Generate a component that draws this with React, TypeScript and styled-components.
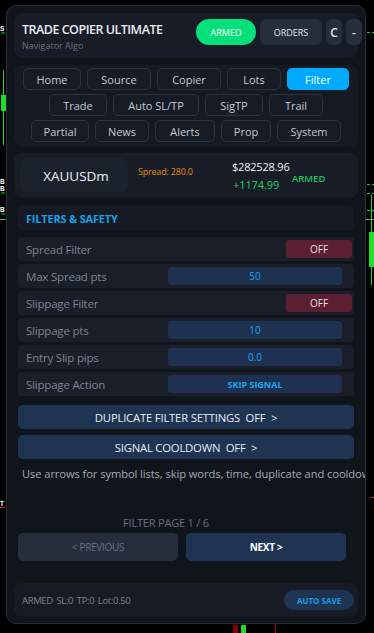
import styled, { createGlobalStyle } from "styled-components";

const GlobalStyle = createGlobalStyle`
  html, body {
    margin: 0;
    padding: 0;
    background: #000000;
  }
  body {
    font-family: "Open Sans", "Noto Sans", "Liberation Sans", sans-serif;
    width: 374px;
    height: 633px;
    overflow: hidden;
  }
`;

const Stage = styled.div`
  position: relative;
  width: 374px;
  height: 633px;
  padding-top: 5px;
  box-sizing: border-box;
`;

const ChartLayer = styled.svg`
  position: absolute;
  left: 0;
  top: 0;
  width: 374px;
  height: 633px;
  z-index: 0;
`;

const Panel = styled.div`
  position: relative;
  z-index: 1;
  margin-left: 6px;
  width: 360px;
  height: 619px;
  box-sizing: border-box;
  border: 1px solid #272d39;
  border-radius: 10px;
  background: #10141b;
  overflow: hidden;
  display: flex;
  flex-direction: column;
  padding: 7px 7px 0 7px;
`;

const Card = styled.div<{ $bg?: string; $mt?: number }>`
  background: ${(p) => p.$bg ?? "#171c26"};
  border-radius: 8px;
  margin-top: ${(p) => p.$mt ?? 0}px;
  box-sizing: border-box;
`;

const HeaderCard = styled(Card)`
  height: 45px;
  display: flex;
  align-items: flex-start;
  padding: 6px 0 0 8px;
`;

const TitleBlock = styled.div`
  display: flex;
  flex-direction: column;
  margin-top: 3px;
`;

const Title = styled.div`
  font-size: 12.5px;
  font-weight: 600;
  color: #e9edf3;
  line-height: 15px;
  letter-spacing: -0.5px;
`;

const Subtitle = styled.div`
  font-size: 9px;
  color: #687080;
  line-height: 12px;
  margin-top: 3px;
`;

const HeaderButtons = styled.div`
  margin-left: auto;
  margin-right: -4px;
  display: flex;
  gap: 4px;
`;

const HeaderButton = styled.div<{ $w: number; $armed?: boolean }>`
  width: ${(p) => p.$w}px;
  height: 26px;
  border-radius: ${(p) => (p.$armed ? "13px" : "6px")};
  background: ${(p) => (p.$armed ? "#06e07a" : "#262d3b")};
  color: ${(p) => (p.$armed ? "#ffffff" : "#e2e5ea")};
  font-size: ${(p) => (p.$w < 20 ? "12px" : "9px")};
  font-weight: ${(p) => (p.$w < 20 ? 600 : 500)};
  display: flex;
  align-items: center;
  justify-content: center;
`;

const TabsCard = styled(Card)`
  height: 82px;
  padding-top: 3px;
  display: flex;
  flex-direction: column;
  gap: 4px;
  background: #151a23;
`;

const TabRow = styled.div`
  display: flex;
  justify-content: center;
  gap: 6px;
`;

const Tab = styled.div<{ $w: number; $active?: boolean }>`
  width: ${(p) => p.$w}px;
  height: 22px;
  box-sizing: border-box;
  border-radius: 5px;
  border: 1px solid ${(p) => (p.$active ? "#00aaff" : "#2b3242")};
  background: ${(p) => (p.$active ? "#00aaff" : "#161b25")};
  color: ${(p) => (p.$active ? "#ffffff" : "#c3c8d1")};
  font-size: 11px;
  display: flex;
  align-items: center;
  justify-content: center;
`;

const SymbolCard = styled(Card)`
  height: 45px;
  padding: 5px 6px;
  display: flex;
  align-items: stretch;
`;

const SymbolBox = styled.div`
  width: 108px;
  border-radius: 7px;
  background: #1c222d;
  color: #eef1f5;
  font-size: 13.5px;
  font-weight: 500;
  display: flex;
  align-items: center;
  justify-content: center;
  padding-left: 4px;
  box-sizing: border-box;
`;

const SpreadText = styled.div`
  width: 104px;
  padding-left: 10px;
  box-sizing: border-box;
  margin-top: 7px;
  font-size: 9px;
  color: #e08d10;
  letter-spacing: -0.2px;
`;

const PriceColumn = styled.div`
  width: 60px;
  display: flex;
  flex-direction: column;
`;

const Balance = styled.div`
  font-size: 11px;
  color: #eef1f5;
  line-height: 14px;
  margin-top: 2px;
  letter-spacing: -0.2px;
`;

const Profit = styled.div`
  font-size: 11px;
  color: #1ed364;
  line-height: 14px;
  margin-top: 4px;
  margin-left: 1px;
  letter-spacing: -0.1px;
`;

const StatusText = styled.div`
  font-size: 9.5px;
  font-weight: 600;
  color: #16c460;
  margin-top: 14px;
`;

const Inset = styled.div<{ $mt?: number }>`
  margin: ${(p) => p.$mt ?? 0}px 4px 0 4px;
`;

const SectionHead = styled.div`
  height: 26px;
  border-radius: 6px;
  background: #151a24;
  display: flex;
  align-items: center;
  padding-left: 8px;
  color: #16a0e6;
  font-size: 11px;
  font-weight: 700;
  letter-spacing: -0.2px;
`;

const Rows = styled.div`
  display: flex;
  flex-direction: column;
  gap: 3px;
`;

const Row = styled.div`
  height: 24px;
  border-radius: 4px;
  background: #191e29;
  display: flex;
  align-items: center;
  padding-left: 8px;
`;

const RowLabel = styled.div`
  width: 142px;
  font-size: 11.5px;
  color: #7c8494;
  letter-spacing: -0.2px;
`;

const ValueBox = styled.div<{ $bold?: boolean }>`
  width: 174px;
  height: 18px;
  border-radius: 3px;
  background: #1e3150;
  color: #1aa6f0;
  font-size: ${(p) => (p.$bold ? "9px" : "10px")};
  font-weight: ${(p) => (p.$bold ? 700 : 400)};
  display: flex;
  align-items: center;
  justify-content: center;
`;

const OffToggle = styled.div`
  margin-left: auto;
  margin-right: 2px;
  width: 66px;
  height: 18px;
  border-radius: 3px;
  background: #5c1f31;
  color: #ebdfe2;
  font-size: 10px;
  display: flex;
  align-items: center;
  justify-content: center;
`;

const WideButton = styled.div<{ $mt: number }>`
  margin-top: ${(p) => p.$mt}px;
  height: 24px;
  border-radius: 5px;
  background: #1f3452;
  color: #e7ecf3;
  font-size: 11.3px;
  font-weight: 500;
  display: flex;
  align-items: center;
  justify-content: center;
  white-space: pre;
  letter-spacing: -0.2px;
`;

const Hint = styled.div`
  margin-top: 7px;
  padding-left: 8px;
  font-size: 11.2px;
  color: #a4aab5;
  white-space: nowrap;
  letter-spacing: -0.1px;
`;

const PageLabel = styled.div`
  margin-top: 34px;
  text-align: center;
  padding-right: 40px;
  font-size: 11px;
  color: #687081;
  letter-spacing: -0.2px;
`;

const PagerRow = styled.div`
  margin: 3px 4px 0 4px;
  display: flex;
  gap: 8px;
`;

const PagerButton = styled.div<{ $primary?: boolean }>`
  width: 160px;
  height: 28px;
  border-radius: 5px;
  background: ${(p) => (p.$primary ? "#1f3452" : "#262e3c")};
  color: ${(p) => (p.$primary ? "#ffffff" : "#687081")};
  font-size: 10px;
  font-weight: ${(p) => (p.$primary ? 700 : 400)};
  display: flex;
  align-items: center;
  justify-content: center;
  letter-spacing: -0.3px;
`;

const FooterCard = styled(Card)`
  height: 34px;
  display: flex;
  align-items: center;
  padding: 0 4px 0 8px;
  background: #171b25;
`;

const FooterText = styled.div`
  font-size: 9.5px;
  color: #7a8292;
  white-space: pre;
  letter-spacing: -0.35px;
  word-spacing: 1.5px;
`;

const AutoSave = styled.div`
  margin-left: auto;
  width: 70px;
  height: 20px;
  border-radius: 10px;
  background: #1f3452;
  color: #169de2;
  font-size: 8px;
  font-weight: 700;
  display: flex;
  align-items: center;
  justify-content: center;
`;

const tabRows: { label: string; w: number; active?: boolean }[][] = [
  [
    { label: "Home", w: 58 },
    { label: "Source", w: 64 },
    { label: "Copier", w: 64 },
    { label: "Lots", w: 54 },
    { label: "Filter", w: 62, active: true },
  ],
  [
    { label: "Trade", w: 58 },
    { label: "Auto SL/TP", w: 86 },
    { label: "SigTP", w: 58 },
    { label: "Trail", w: 54 },
  ],
  [
    { label: "Partial", w: 58 },
    { label: "News", w: 54 },
    { label: "Alerts", w: 60 },
    { label: "Prop", w: 50 },
    { label: "System", w: 64 },
  ],
];

type FilterRow =
  | { label: string; kind: "toggle" }
  | { label: string; kind: "value"; value: string; bold?: boolean };

const filterRows: FilterRow[] = [
  { label: "Spread Filter", kind: "toggle" },
  { label: "Max Spread pts", kind: "value", value: "50" },
  { label: "Slippage Filter", kind: "toggle" },
  { label: "Slippage pts", kind: "value", value: "10" },
  { label: "Entry Slip pips", kind: "value", value: "0.0" },
  { label: "Slippage Action", kind: "value", value: "SKIP SIGNAL", bold: true },
];

function ChartBackdrop() {
  return (
    <ChartLayer viewBox="0 0 374 633">
      <g fontFamily="Liberation Sans, sans-serif" fontSize="6.5" fill="#ffffff" fontWeight="700">
        <text x="0" y="31">S</text>
        <text x="0" y="183.5">B</text>
        <text x="0" y="190.5">B</text>
        <text x="0" y="212">B</text>
        <text x="0" y="506">T</text>
      </g>
      <line x1="1" y1="33" x2="5" y2="33" stroke="#22cc22" />
      <line x1="1" y1="193" x2="5" y2="193" stroke="#22cc22" />
      <line x1="1" y1="214" x2="5" y2="214" stroke="#22cc22" />
      <line x1="0" y1="507.5" x2="5" y2="507.5" stroke="#dd2222" />
      <line x1="0" y1="219.5" x2="6" y2="219.5" stroke="#8a8f99" />
      <line x1="3.5" y1="70" x2="3.5" y2="145" stroke="#22dd22" />
      <rect x="1" y="95" width="5" height="16" fill="#22dd22" />

      <line x1="367" y1="32.5" x2="374" y2="32.5" stroke="#22cc22" strokeDasharray="3 2" />
      <line x1="367" y1="184.5" x2="374" y2="184.5" stroke="#22cc22" strokeDasharray="3 2" />
      <line x1="367" y1="193.5" x2="374" y2="193.5" stroke="#22cc22" strokeDasharray="3 2" />
      <line x1="367" y1="210.5" x2="374" y2="210.5" stroke="#22cc22" strokeDasharray="3 2" />
      <line x1="366" y1="219.5" x2="374" y2="219.5" stroke="#8a8f99" />
      <line x1="371.5" y1="195" x2="371.5" y2="285" stroke="#22dd22" />
      <rect x="369" y="232" width="5" height="35" fill="#22dd22" />
      <line x1="370" y1="497.5" x2="374" y2="497.5" stroke="#dd2222" />

      <rect x="233" y="625" width="5" height="8" fill="#8b0000" />
      <rect x="241" y="625" width="5" height="8" fill="#22dd22" />
      <line x1="275.5" y1="625" x2="275.5" y2="633" stroke="#aa1111" />
    </ChartLayer>
  );
}

export default function App() {
  return (
    <>
      <GlobalStyle />
      <Stage>
        <ChartBackdrop />
        <Panel>
          <HeaderCard>
            <TitleBlock>
              <Title>TRADE COPIER ULTIMATE</Title>
              <Subtitle>Navigator Algo</Subtitle>
            </TitleBlock>
            <HeaderButtons>
              <HeaderButton $w={60} $armed>
                ARMED
              </HeaderButton>
              <HeaderButton $w={62}>ORDERS</HeaderButton>
              <HeaderButton $w={16}>C</HeaderButton>
              <HeaderButton $w={16}>-</HeaderButton>
            </HeaderButtons>
          </HeaderCard>

          <TabsCard $mt={7}>
            {tabRows.map((row, i) => (
              <TabRow key={i}>
                {row.map((tab) => (
                  <Tab key={tab.label} $w={tab.w} $active={tab.active}>
                    {tab.label}
                  </Tab>
                ))}
              </TabRow>
            ))}
          </TabsCard>

          <SymbolCard $mt={6}>
            <SymbolBox>XAUUSDm</SymbolBox>
            <SpreadText>Spread: 280.0</SpreadText>
            <PriceColumn>
              <Balance>$282528.96</Balance>
              <Profit>+1174.99</Profit>
            </PriceColumn>
            <StatusText>ARMED</StatusText>
          </SymbolCard>

          <Inset $mt={7}>
            <SectionHead>FILTERS &amp; SAFETY</SectionHead>
          </Inset>

          <Inset $mt={6}>
            <Rows>
              {filterRows.map((row) => (
                <Row key={row.label}>
                  <RowLabel>{row.label}</RowLabel>
                  {row.kind === "toggle" ? (
                    <OffToggle>OFF</OffToggle>
                  ) : (
                    <ValueBox $bold={row.bold}>{row.value}</ValueBox>
                  )}
                </Row>
              ))}
            </Rows>
            <WideButton $mt={9}>{"DUPLICATE FILTER SETTINGS  OFF  >"}</WideButton>
            <WideButton $mt={6}>{"SIGNAL COOLDOWN  OFF  >"}</WideButton>
          </Inset>

          <Hint>Use arrows for symbol lists, skip words, time, duplicate and cooldown.</Hint>

          <PageLabel>FILTER PAGE 1 / 6</PageLabel>
          <PagerRow>
            <PagerButton>&lt; PREVIOUS</PagerButton>
            <PagerButton $primary>NEXT &gt;</PagerButton>
          </PagerRow>

          <FooterCard $mt={22}>
            <FooterText>{"ARMED SL:0 TP:0 Lot:0.50"}</FooterText>
            <AutoSave>AUTO SAVE</AutoSave>
          </FooterCard>
        </Panel>
      </Stage>
    </>
  );
}
